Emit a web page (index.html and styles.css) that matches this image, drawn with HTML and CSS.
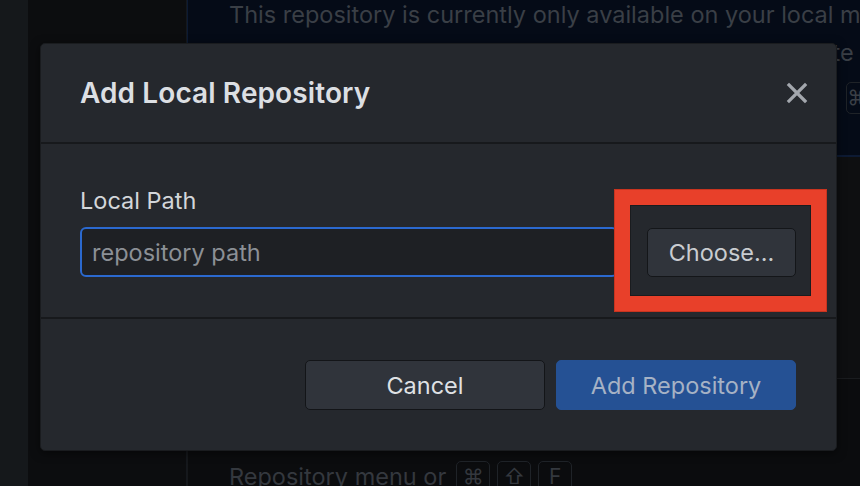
FILE: index.html
```html
<!DOCTYPE html>
<html lang="en">
<head>
<meta charset="utf-8">
<title>Add Local Repository</title>
<link rel="stylesheet" href="styles.css">
</head>
<body>
<div class="app">
  <aside class="rail"></aside>
  <aside class="sidebar"></aside>
  <main class="main">
    <section class="banner">
      <p class="line first">This repository is currently only available on your local machine.</p>
      <p class="line second">By publishing it on GitHub, you'll sync it, and collaborate with others.</p>
      <p class="line kbd-line third">Always available in the toolbar for local repositories or <span class="kbd">⌘</span><span class="kbd">P</span></p>
    </section>
    <section class="middle"></section>
    <section class="footer-hint">
      <p class="line kbd-line">Repository menu or <span class="kbd">⌘</span><span class="kbd">⇧</span><span class="kbd">F</span></p>
    </section>
  </main>
</div>

<div class="dialog">
  <header class="dialog-header">
    <h1 class="dialog-title">Add Local Repository</h1>
    <button class="close" aria-label="Close">
      <svg width="22" height="22" viewBox="0 0 22 22"><path d="M3 3 L19 19 M19 3 L3 19" stroke="#a3a7ad" stroke-width="3.2" stroke-linecap="square"/></svg>
    </button>
  </header>
  <div class="dialog-body">
    <label class="field-label">Local Path</label>
    <div class="path-row">
      <input class="path-input" type="text" placeholder="repository path">
      <button class="btn choose">Choose...</button>
    </div>
  </div>
  <footer class="dialog-footer">
    <button class="btn cancel">Cancel</button>
    <button class="btn primary">Add Repository</button>
  </footer>
</div>

<div class="highlight"></div>
</body>
</html>
```
FILE: styles.css
```css
* { box-sizing: border-box; }
html, body { margin: 0; padding: 0; }
body {
  width: 860px;
  height: 486px;
  overflow: hidden;
  background: #0c0d0f;
  font-family: Inter, "Noto Sans", sans-serif;
  position: relative;
}
.app {
  display: flex;
  height: 486px;
}
.rail {
  width: 28px;
  flex: none;
  background: #15181b;
}
.sidebar {
  width: 159px;
  flex: none;
  background: #0c0d0f;
  border-right: 1px solid #15181d;
}
.main {
  flex: 1;
  display: flex;
  flex-direction: column;
  min-width: 0;
  overflow: hidden;
}
.banner {
  height: 157px;
  flex: none;
  background: #050b17;
  border-bottom: 2px solid #0d1a33;
  padding: 0 0 0 41px;
  border-left: 1px solid #0c1a33;
}
.line {
  margin: 0;
  white-space: nowrap;
  color: #3a3f46;
  font-size: 23.5px;
  line-height: 36px;
}
.line.first { margin-top: -3px; }
.line.second { margin-top: 2px; }
.kbd-line {
  display: flex;
  align-items: center;
  height: 52px;
}
.kbd-line.third { height: 54px; }
.kbd {
  display: inline-flex;
  align-items: center;
  justify-content: center;
  width: 34px;
  height: 32px;
  margin-left: 7px;
  border: 1px solid #1f2328;
  border-radius: 5px;
  font-size: 21px;
  color: #3a3f46;
}
.kbd:first-of-type { margin-left: 10px; }
.third .kbd:first-of-type { margin-left: 17px; }
.middle {
  height: 222px;
  flex: none;
  background: #0e0f11;
  border-bottom: 1px solid #1a1c1f;
}
.footer-hint {
  flex: 1;
  background: #0b0c0e;
  padding: 72px 0 0 41px;
  border-left: 1px solid #16181b;
}
.footer-hint .line { color: #34383e; }
.footer-hint .kbd { margin-top: 0; color: #34383e; }

.dialog {
  position: absolute;
  left: 40px;
  top: 43px;
  width: 797px;
  height: 408px;
  background: #25282d;
  border: 1px solid #1a1c1f;
  border-radius: 5px;
  box-shadow: 0 2px 10px rgba(0,0,0,0.5);
  display: flex;
  flex-direction: column;
}
.dialog-header {
  height: 100px;
  display: flex;
  align-items: center;
  justify-content: space-between;
  padding: 0 28px 0 39px;
  border-bottom: 2px solid #17191c;
}
.dialog-title {
  margin: 0;
  font-size: 28px;
  font-weight: 600;
  color: #dcdfe3;
  letter-spacing: 0.1px;
}
.close {
  background: none;
  border: 0;
  padding: 0;
  width: 22px;
  height: 22px;
  display: flex;
}
.dialog-body {
  height: 175px;
  padding: 43px 40px 0 39px;
  border-bottom: 2px solid #17191c;
}
.field-label {
  display: block;
  font-size: 23.5px;
  color: #d3d6da;
  line-height: 28px;
  margin-bottom: 12px;
}
.path-row {
  display: flex;
  gap: 29px;
  align-items: center;
}
.path-input {
  flex: 1;
  height: 50px;
  background: #1e2024;
  border: 2px solid #2b69cf;
  border-radius: 6px;
  padding: 0 10px;
  font-family: inherit;
  font-size: 23.5px;
  color: #d3d6da;
  outline: none;
}
.path-input::placeholder { color: #8c9096; }
.btn {
  font-family: inherit;
  font-size: 23.5px;
  border-radius: 5px;
  height: 49px;
  cursor: pointer;
  padding: 0;
}
.choose {
  width: 149px;
  background: #30343b;
  border: 1px solid #141619;
  color: #c9ccd0;
}
.dialog-footer {
  flex: 1;
  display: flex;
  justify-content: flex-end;
  align-items: flex-start;
  gap: 11px;
  padding: 41px 40px 0 0;
}
.cancel {
  width: 240px;
  height: 50px;
  background: #30343b;
  border: 1px solid #131518;
  color: #dfe1e4;
}
.primary {
  width: 240px;
  height: 50px;
  background: #255194;
  border: 1px solid #255194;
  color: #a6b2c5;
}

.highlight {
  position: absolute;
  left: 615px;
  top: 190px;
  width: 211px;
  height: 121px;
  border: 15px solid #e8402a;
  box-shadow: inset 0 0 0 1px #1a1c1f, 0 0 0 1px #c8341f;
}
```
